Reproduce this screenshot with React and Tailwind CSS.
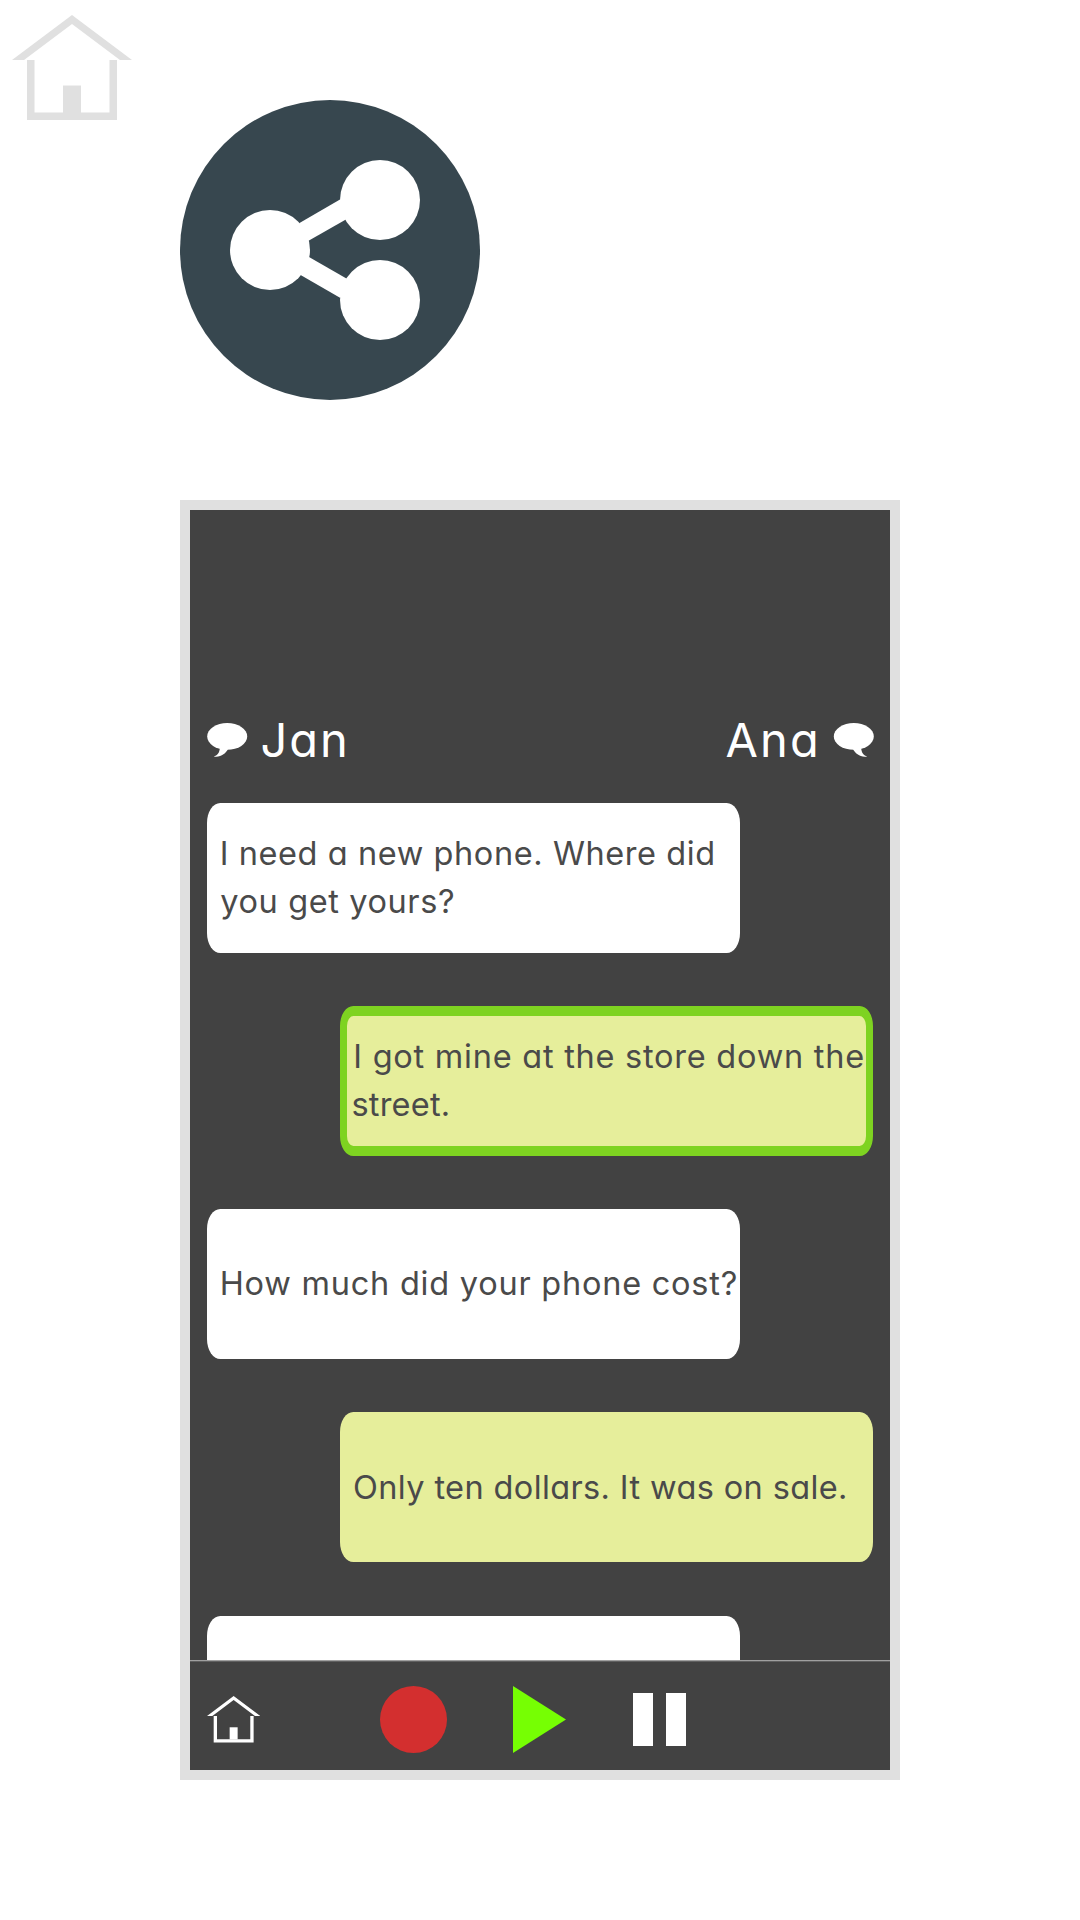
const MESSAGES = [
  {
    from: "jan",
    lines: [
      { text: "I need a new phone. Where did", style: "ml-[13px] tracking-[0.58px]" },
      { text: "you get yours?", style: "ml-[13.6px] tracking-[0.6px]" },
    ],
  },
  {
    from: "ana",
    active: true,
    lines: [
      { text: "I got mine at the store down the", style: "ml-[6.3px] tracking-[0.75px]" },
      { text: "street.", style: "ml-[4.5px] tracking-[0.2px]" },
    ],
  },
  {
    from: "jan",
    lines: [{ text: "How much did your phone cost?", style: "ml-[13px] tracking-[0.76px]" }],
  },
  {
    from: "ana",
    lines: [{ text: "Only ten dollars. It was on sale.", style: "ml-[13px] tracking-[0.38px]" }],
  },
  { from: "jan", lines: [] },
];

function HomeIcon({ className }) {
  return (
    <svg viewBox="0 0 120 105" className={className} fill="currentColor">
      <path d="M60 0 120 45H108L60 9 12 45H0Z" />
      <path d="M15 45h7.5v52.5h75V45h7.5v60H15Z" />
      <path d="M51 70.5h18V98H51Z" />
    </svg>
  );
}

function ShareIcon({ className }) {
  return (
    <svg viewBox="0 0 300 300" className={className}>
      <circle cx="150" cy="150" r="150" fill="#37474f" />
      <g fill="#fff">
        <circle cx="90" cy="150" r="40" />
        <circle cx="200" cy="100" r="40" />
        <circle cx="200" cy="200" r="40" />
        <path d="M119.5 123 160 99.5 180 110 165 120 129 140.5 105 150Z" />
        <path d="M129 157 166 178.3 185 190 160 197.7 121 175.3 105 150Z" />
      </g>
    </svg>
  );
}

function SpeechIcon({ className }) {
  return (
    <svg viewBox="0 0 41 34" className={className} fill="#fff">
      <ellipse cx="20.2" cy="13.4" rx="20" ry="13.4" />
      <path d="M12.8 25C12.6 30 10 32.6 6.8 33.5C13 35 19 30.5 21 26Z" />
    </svg>
  );
}

function Bubble({ from, active, lines }) {
  const side = from === "jan" ? "self-start bg-white" : "self-end bg-[#e6ee9b]";
  const ring = active ? "border-x-[7px] border-y-[10px] border-[#7ed321]" : "";
  return (
    <li
      className={`flex h-[150px] w-[533.3px] shrink-0 flex-col justify-center rounded-[13.3px/20px] ${side} ${ring}`}
    >
      {lines.map((line) => (
        <p
          key={line.text}
          className={`whitespace-nowrap text-[32.5px] leading-[47.5px] text-[#4a4a4a] ${line.style}`}
        >
          {line.text}
        </p>
      ))}
    </li>
  );
}

export default function App() {
  return (
    <div className="flex h-[1920px] w-[1080px] flex-col overflow-hidden bg-white font-['Inter',sans-serif] [font-feature-settings:'cv11']">
      <header className="flex h-[500px] shrink-0 items-start">
        <HomeIcon className="mt-[15px] ml-3 h-[105px] w-[120px] text-[#e0e0e0]" />
        <ShareIcon className="mt-[100px] ml-12 size-[300px]" />
      </header>

      <main className="ml-[180px] flex h-[1280px] w-[720px] shrink-0 flex-col border-10 border-[#e0e0e0] bg-[#424242]">
        <div className="flex h-[292.5px] shrink-0 items-start justify-between px-[16.5px] pt-[198px] text-[47px] leading-[63px] text-white">
          <div className="flex items-start">
            <SpeechIcon className="mt-[15px] h-[34px] w-[41px]" />
            <span className="ml-[13px] tracking-[2px]">Jan</span>
          </div>
          <div className="flex items-start">
            <span className="mr-[11.5px] tracking-[2.2px]">Ana</span>
            <SpeechIcon className="mt-[15px] h-[34px] w-[41px] -scale-x-100" />
          </div>
        </div>

        <ul className="flex min-h-0 flex-1 flex-col gap-[53.3px] overflow-hidden px-[16.7px]">
          {MESSAGES.map((message, i) => (
            <Bubble key={i} {...message} />
          ))}
        </ul>

        <footer className="flex h-[110px] shrink-0 items-center border-t border-[#a0a0a0] px-[17px] pt-2 shadow-[inset_0_1px_0_#606060]">
          <HomeIcon className="h-[46.6px] w-[53.3px] text-white" />
          <div className="ml-[119.7px] size-[67px] rounded-full bg-[#d32f2f]" />
          <svg viewBox="0 0 53 67" className="ml-[66.5px] h-[67px] w-[53px]" fill="#76ff03">
            <path d="M0 0 53 33.5 0 67Z" />
          </svg>
          <div className="ml-[67px] flex h-[53.5px] gap-[13px]">
            <div className="w-5 bg-white" />
            <div className="w-5 bg-white" />
          </div>
        </footer>
      </main>
    </div>
  );
}
